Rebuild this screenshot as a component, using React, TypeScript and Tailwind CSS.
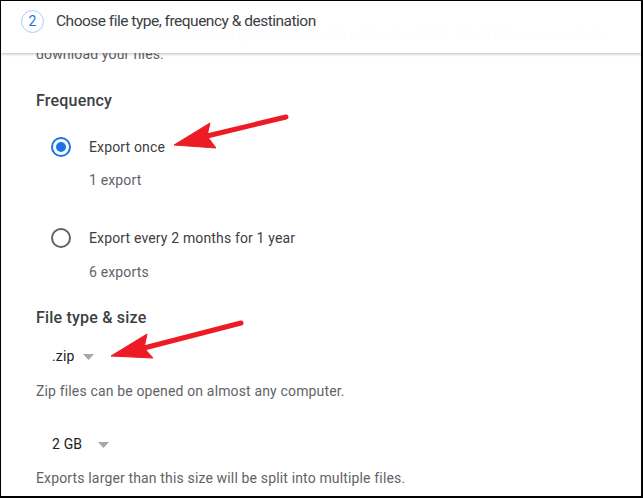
import React from 'react';

const font = { fontFamily: 'Roboto, "Noto Sans", Arial, sans-serif' };

function Caret() {
  return (
    <svg width="11" height="6" viewBox="0 0 11 6" className="shrink-0">
      <path d="M0 0h11L5.5 6z" fill="#a7a7a7" />
    </svg>
  );
}

function Radio({ checked }: { checked?: boolean }) {
  return (
    <span
      className={`flex h-[20px] w-[20px] shrink-0 items-center justify-center rounded-full border-2 ${
        checked ? 'border-[#1a73e8]' : 'border-[#5f6368]'
      }`}
    >
      {checked && <span className="h-[10px] w-[10px] rounded-full bg-[#1a73e8]" />}
    </span>
  );
}

function Arrow({ tail, tip, wingA, wingB, notch }: {
  tail: [number, number];
  tip: [number, number];
  wingA: [number, number];
  wingB: [number, number];
  notch: [number, number];
}) {
  return (
    <g fill="#ed1c24" stroke="#ed1c24">
      <line x1={tail[0]} y1={tail[1]} x2={notch[0]} y2={notch[1]} strokeWidth="5" strokeLinecap="round" />
      <polygon
        points={`${tip.join(',')} ${wingA.join(',')} ${notch.join(',')} ${wingB.join(',')}`}
        strokeWidth="1"
        strokeLinejoin="round"
      />
    </g>
  );
}

export default function App() {
  return (
    <div
      style={font}
      className="relative h-[498px] w-[643px] overflow-hidden border-t border-l border-r-2 border-b-2 border-black bg-white"
    >
      {/* Scrolled content */}
      <div className="flex flex-col pl-[35px] tracking-[0.15px]">
        <p className="mt-[-13px] pl-[7px] text-[14px] leading-[20px] text-[#5f6368]">Send download link via email</p>
        <p className="mt-[16px] text-[14px] leading-[20px] text-[#5f6368]">
          When your files are ready, you'll get an email with a download link. You'll have one week to
          <br />
          download your files.
        </p>

        <h3 className="mt-[27px] text-[16px] font-medium leading-[20px] tracking-[0.2px] text-[#3c4043]">Frequency</h3>

        <div className="mt-[26px] flex items-center pl-[15px]">
          <Radio checked />
          <span className="ml-[18px] text-[14px] leading-[20px] text-[#3c4043]">Export once</span>
        </div>
        <p className="mt-[13px] pl-[53px] text-[14px] leading-[20px] text-[#5f6368]">1 export</p>

        <div className="mt-[38px] flex items-center pl-[15px]">
          <Radio />
          <span className="ml-[18px] text-[14px] leading-[20px] text-[#3c4043]">
            Export every 2 months for 1 year
          </span>
        </div>
        <p className="mt-[14px] pl-[53px] text-[14px] leading-[20px] text-[#5f6368]">6 exports</p>

        <h3 className="mt-[26px] text-[16px] font-medium leading-[20px] tracking-[0.2px] text-[#3c4043]">
          File type &amp; size
        </h3>

        <div className="mt-[18px] flex items-center pl-[16px]">
          <span className="text-[14px] leading-[20px] text-[#202124]">.zip</span>
          <span className="ml-[8px] mt-[2px]">
            <Caret />
          </span>
        </div>
        <p className="mt-[15px] text-[14px] leading-[20px] text-[#5f6368]">
          Zip files can be opened on almost any computer.
        </p>

        <div className="mt-[33px] flex items-center pl-[16px]">
          <span className="text-[14px] leading-[20px] text-[#202124]">2 GB</span>
          <span className="ml-[16px] mt-[2px]">
            <Caret />
          </span>
        </div>
        <p className="mt-[14px] text-[14px] leading-[20px] text-[#5f6368]">
          Exports larger than this size will be split into multiple files.
        </p>
      </div>

      {/* Sticky step header */}
      <div className="absolute left-0 right-0 top-0 flex h-[52px] items-start bg-white/[0.985] pl-[20px] pt-[9px] shadow-[0_1px_3px_rgba(0,0,0,0.28)]">
        <span className="flex h-[23px] w-[23px] items-center justify-center rounded-full border border-[#aecbfa] text-[14px] text-[#1a73e8]">
          2
        </span>
        <span className="ml-[12px] mt-[1px] text-[15.5px] leading-[20px] tracking-[-0.5px] text-[#3c4043]">
          Choose file type, frequency &amp; destination
        </span>
      </div>

      {/* Annotation arrows */}
      <svg className="pointer-events-none absolute left-0 top-0" width="643" height="498">
        <Arrow tail={[285, 116]} tip={[173, 144]} wingA={[209, 122]} wingB={[215, 147]} notch={[206, 135]} />
        <Arrow tail={[240, 322]} tip={[110, 355]} wingA={[146, 333]} wingB={[152, 357]} notch={[143, 347]} />
      </svg>
    </div>
  );
}
